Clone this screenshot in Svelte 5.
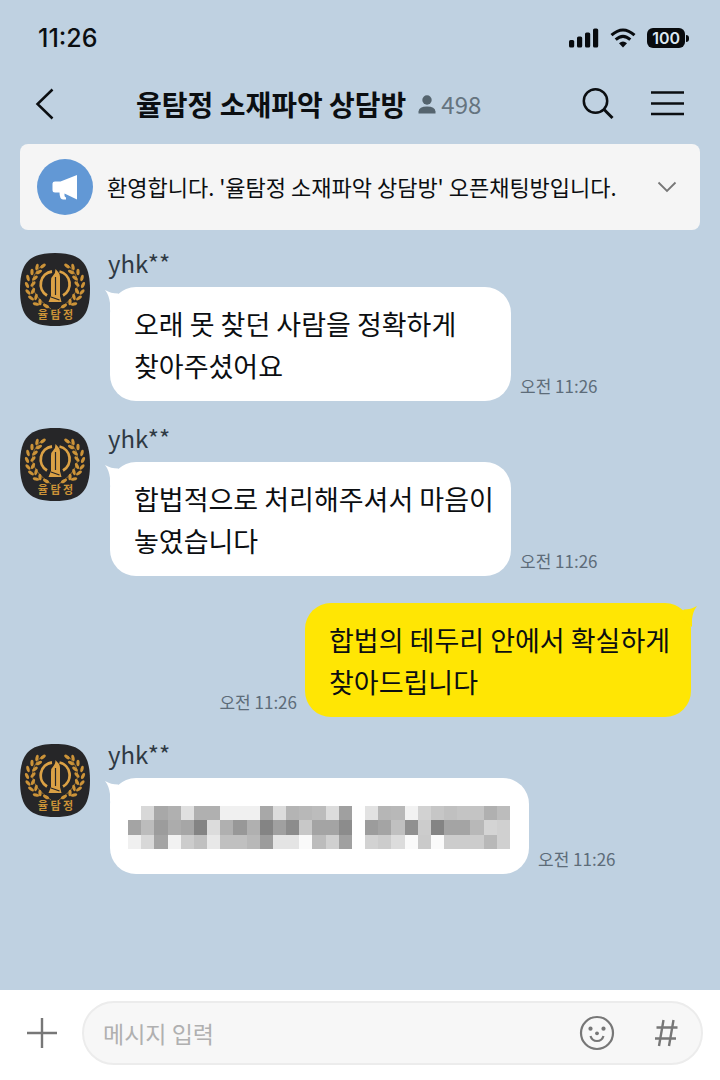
<script>
  const messages = [
    { name: 'yhk**', text: '오래 못 찾던 사람을 정확하게 찾아주셨어요', time: '오전 11:26' },
    { name: 'yhk**', text: '합법적으로 처리해주셔서 마음이 놓였습니다', time: '오전 11:26' },
    { mine: true, text: '합법의 테두리 안에서 확실하게 찾아드립니다', time: '오전 11:26' },
    { name: 'yhk**', hidden: true, time: '오전 11:26' }
  ];

  // Grey levels of the censored block, one hex byte per cell
  const mosaic = [
    'ffd8a8b0e0b0b0f0f0f0a8dcb4b8bcdca0fee2b6b8f2d2c6c0c4c4b0bc',
    'a4bc9caca684dcb098b084a08cc8a4a48cfe9ca4c090cc84a4a4b8d4d0',
    'f0d8a4f2ccc0e8c0c0b89ce4e4fabcd0a0fed2ccdcfacafaccccccb8d0'
  ].map((row) => row.match(/../g));

  // Laurel leaves: position and rotation, mirrored for the right side
  const leaves = [
    [23, 13, -50], [17, 14, -10], [19, 19, -60], [12, 19, 0],
    [15, 25, -50], [8, 25, 12], [13, 31, -40], [7, 32, 25],
    [13, 38, -25], [8, 39, 40], [16, 44, -10], [11, 45, 55],
    [20, 49, 5], [16, 51, 75], [26, 53, 60]
  ];
</script>

<svelte:head><title>율탐정 소재파악 상담방</title></svelte:head>

<div class="app">
  <div class="status">
    <time>11:26</time>
    <div class="indicators">
      <svg width="30" height="20" viewBox="0 0 30 20" fill="#080b0e" aria-hidden="true">
        <rect x="0" y="12" width="5.200" height="7.500" rx="1.600" /><rect x="8" y="8.500" width="5.200" height="11" rx="1.600" />
        <rect x="16" y="4.500" width="5.200" height="15" rx="1.600" /><rect x="24" y="0.500" width="5.200" height="19" rx="1.600" />
      </svg>
      <svg width="26" height="20" viewBox="0 0 26 20" fill="none" stroke="#080b0e" stroke-width="3" aria-hidden="true">
        <path d="M1.500 7.200Q13-3.300 24.500 7.200" /><path d="M5.700 11.700Q13 5 20.300 11.700" />
        <path d="M9 15.200Q13 11.800 17 15.200L13 19.500Z" fill="#080b0e" stroke="none" />
      </svg>
      <span class="battery">100</span>
    </div>
  </div>

  <header>
    <button aria-label="뒤로">
      <svg width="20" height="32" viewBox="0 0 20 32" fill="none" stroke="#0b0e11" stroke-width="2.500"><path d="M17.500 1.500 2.500 16 17.500 30.500" /></svg>
    </button>
    <div class="heading">
      <h1>율탐정 소재파악 상담방</h1>
      <span class="count">
        <svg width="18" height="19" viewBox="0 0 18 19" fill="#55646e" aria-hidden="true"><circle cx="9" cy="5" r="4.700" /><path d="M0.500 18.500V16.500Q1 11.500 9 11.500T17.500 16.500V18.500Z" /></svg>
        498
      </span>
    </div>
    <button aria-label="검색">
      <svg width="32" height="32" viewBox="0 0 32 32" fill="none" stroke="#0b0e11" stroke-width="2.500"><circle cx="13.500" cy="13" r="11.700" /><path d="M21.800 21.300 30.500 30" stroke-width="3" /></svg>
    </button>
    <button aria-label="메뉴">
      <svg width="33" height="26" viewBox="0 0 33 26" stroke="#0b0e11" stroke-width="2.500"><path d="M0 1.500H33M0 12.500H33M0 23H33" /></svg>
    </button>
  </header>

  <section class="notice">
    <span class="horn">
      <svg width="28" height="28" viewBox="0 0 28 28" fill="#fff" aria-hidden="true"><path d="M26 2V26.500L13.500 20.500V22.500Q13.500 24 15 24.500V26.500H12Q8.500 26 8.500 19.500H4Q1.500 19.500 1.500 17V10.500Q1.500 8.500 4 8.500H9.500Z" /></svg>
    </span>
    <p>환영합니다. '율탐정 소재파악 상담방' 오픈채팅방입니다.</p>
    <button aria-label="공지 펼치기">
      <svg width="20" height="12" viewBox="0 0 20 12" fill="none" stroke="#777" stroke-width="1.800"><path d="M1.500 1.500 10 10 18.500 1.500" /></svg>
    </button>
  </section>

  <main>
    {#each messages as m}
      <article class:mine={m.mine}>
        {#if !m.mine}
          <svg class="avatar" width="70" height="73" viewBox="0 0 70 73" role="img" aria-label="율탐정">
            <path d="M35 0C60 0 70 9 70 36.500S60 73 35 73 0 64 0 36.500 10 0 35 0Z" fill="#262628" />
            <g fill="#cc9338">
              {#each [0, 1] as side}
                <g transform={side ? 'translate(70 0) scale(-1 1)' : undefined}>
                  <path d="M22 12Q-1 34 31 56" fill="none" stroke="#cc9338" stroke-width="0.700" />
                  {#each leaves as [x, y, r]}
                    <ellipse cx={x} cy={y} rx="1.600" ry="3.300" transform={`rotate(${-r} ${x} ${y})`} />
                  {/each}
                </g>
              {/each}
              <path d="M32 18.500A13 13 0 0 0 27 42.500M39.500 18.500A13 13 0 0 1 43 42.500" fill="none" stroke="#dba145" stroke-width="2.800" />
              <path d="M35.500 16C38 19 40 20 40 24V43L41.500 49H28.500L31 43V28Q31 24 33.500 22Q35.500 20 35.500 16Z" fill="#dba145" />
              <path d="M35.500 24V42M31 44 39.500 47" stroke="#262628" stroke-width="1.200" />
            </g>
            <text x="35.500" y="66" text-anchor="middle">율 탐 정</text>
          </svg>
        {/if}
        <div class="body">
          {#if m.name}<h2>{m.name}</h2>{/if}
          <div class="line">
            <div class="bubble" class:censored={m.hidden}>
              <svg class="tail" width="18" height="22" viewBox="0 0 18 22" aria-hidden="true"><path d="M0 1Q6 4.500 13 4.500L18 10 5 22V14Q4 6 0 1Z" fill="currentColor" /></svg>
              {#if m.hidden}
                <div class="mosaic" role="img" aria-label="가려진 메시지">
                  {#each mosaic as row}{#each row as v}<i style:background={`#${v}${v}${v}`}></i>{/each}{/each}
                </div>
              {:else}
                <p>{m.text}</p>
              {/if}
            </div>
            <time>{m.time}</time>
          </div>
        </div>
      </article>
    {/each}
  </main>

  <footer>
    <button aria-label="추가">
      <svg width="30" height="30" viewBox="0 0 30 30" stroke="#777" stroke-width="2.400"><path d="M0 15H30M15 0V30" /></svg>
    </button>
    <div class="field">
      <input type="text" placeholder="메시지 입력" aria-label="메시지 입력" />
      <button aria-label="이모티콘">
        <svg width="36" height="36" viewBox="0 0 36 36" fill="none" stroke="#777" stroke-width="2.200"><circle cx="18" cy="18" r="16" /><path d="M11.500 21Q13 26 18 26T24.500 21" /><g fill="#777" stroke="none"><circle cx="11.500" cy="13.700" r="2.100" /><circle cx="24.500" cy="13.700" r="2.100" /><circle cx="18" cy="18.300" r="1.900" /></g></svg>
      </button>
      <button aria-label="샵 검색">
        <svg width="24" height="28" viewBox="0 0 24 28" fill="none" stroke="#777" stroke-width="2.400"><path d="M9.500 1 5 27M19.500 1 15 27M2.500 8.500H23.500M1 19.500H22" /></svg>
      </button>
    </div>
  </footer>
</div>

<style>
  :global(body) { margin: 0; }
  .app {
    min-height: 100vh;
    display: flex;
    flex-direction: column;
    background: #bfd1e1;
    color: #0b0e11;
    font-family: "Noto Sans CJK KR", sans-serif;
  }
  h1, h2, p { margin: 0; font-weight: 400; }
  svg { display: block; flex: none; }
  button { display: flex; flex: none; padding: 0; border: 0; background: none; cursor: pointer; }

  .status { display: flex; justify-content: space-between; align-items: center; height: 36px; padding: 20px 31px 16px 38px; }
  .status time { font: 500 25px/36px Inter, sans-serif; }
  .indicators { display: flex; align-items: center; gap: 11px; }
  .battery {
    position: relative;
    padding: 0 5px;
    border-radius: 6px;
    background: #080b0e;
    color: #dce8f2;
    font: 600 16px/20px Inter, sans-serif;
    margin-right: 4px;
  }
  .battery::after { content: ""; position: absolute; right: -4px; top: 7px; width: 3px; height: 7px; border-radius: 0 3px 3px 0; background: #080b0e; }

  header { display: flex; align-items: center; height: 64px; padding: 0 36px 0 35px; }
  .heading { flex: 1; display: flex; align-items: center; gap: 12px; padding-left: 81px; }
  h1 { font-size: 28px; line-height: 40px; font-weight: 700; white-space: nowrap; }
  .count { display: flex; align-items: center; gap: 5px; color: #65747f; font-size: 24px; line-height: 40px; }
  header button + button { margin-left: 37px; }

  .notice { display: flex; align-items: center; margin: 8px 20px 0; height: 86px; padding: 0 23px 0 17px; box-sizing: border-box; border-radius: 8px; background: #f5f5f5; }
  .horn { display: grid; place-items: center; flex: none; width: 56px; height: 56px; border-radius: 50%; background: #6298d5; }
  .notice p { flex: 1; padding: 0 0 2px 14px; font-size: 22px; line-height: 32px; white-space: nowrap; }

  main { flex: 1; display: flex; flex-direction: column; gap: 27px; padding: 23px 29px 28px 20px; }
  article { display: flex; align-items: flex-start; gap: 20px; }
  article.mine { justify-content: flex-end; }
  .avatar text { fill: #cc9338; font: 700 11px "Noto Sans CJK KR", sans-serif; }
  h2 { height: 34px; font-size: 24px; line-height: 20px; color: #2f3a44; margin-left: -2px; }
  .line { display: flex; align-items: flex-end; gap: 9px; }
  .mine .line { flex-direction: row-reverse; gap: 8px; }
  .line time { flex: none; padding-bottom: 3px; font-size: 17px; line-height: 24px; color: #5d6c79; }
  .bubble { position: relative; box-sizing: border-box; max-width: 401px; padding: 16px 12px 14px 24px; border-radius: 26px; background: #fff; color: #fff; }
  .bubble p { font-size: 27px; line-height: 42px; color: #0b0e11; word-break: keep-all; }
  .mine .bubble { max-width: 386px; background: #ffe604; color: #ffe604; }
  .tail { position: absolute; left: -5px; top: 2px; }
  .mine .tail { left: auto; right: -6px; transform: scaleX(-1); }
  .bubble.censored { max-width: none; padding: 28px 19px 25px 18px; }
  .mosaic { display: grid; grid-template-columns: repeat(29, 1fr); grid-template-rows: repeat(3, 1fr); width: 382px; height: 43px; }

  footer { display: flex; align-items: center; gap: 25px; padding: 11px 17px 15px 27px; background: #fff; }
  .field { flex: 1; display: flex; align-items: center; gap: 39px; height: 64px; padding: 0 23px 0 19px; box-sizing: border-box; border: 2px solid #ececec; border-radius: 32px; background: #f7f7f7; }
  input { flex: 1; min-width: 0; padding: 0; border: 0; outline: 0; background: none; color: #0b0e11; font: 400 23px/34px "Noto Sans CJK KR", sans-serif; }
  input::placeholder { color: #b0b0b0; opacity: 1; }
</style>
